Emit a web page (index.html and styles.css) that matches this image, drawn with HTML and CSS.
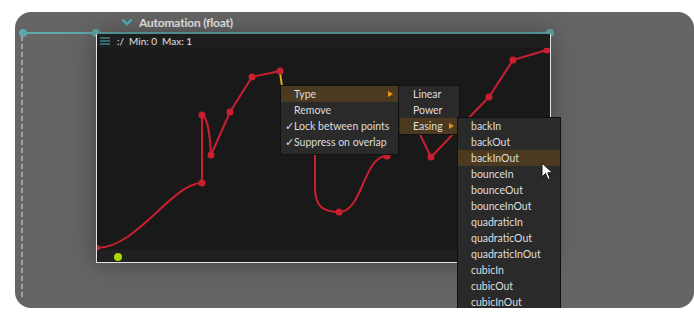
FILE: index.html
```html
<!DOCTYPE html>
<html lang="en">
<head>
    <meta charset="UTF-8">
    <title>Automation</title>
    <link rel="stylesheet" href="styles.css">
</head>
<body>
    <div class="panel">
        <div class="panel-title">
            <svg class="chevron" width="12" height="8" viewBox="0 0 12 8">
                <path d="M1.5 1.5 L6 6 L10.5 1.5" fill="none" stroke="#4fb3c0" stroke-width="2.4"/>
            </svg>
            <span>Automation (float)</span>
        </div>

        <!-- canvas: link line, ports, node -->
        <div class="link-line"></div>
        <div class="port port-a"></div>
        <div class="port port-b"></div>
        <div class="port port-c"></div>
        <div class="dash-line"></div>

        <div class="node">
            <div class="node-header">
                <svg width="10" height="8" viewBox="0 0 10 8">
                    <path d="M0 1 H10 M0 4 H10 M0 7 H10" stroke="#4fb3c0" stroke-width="1.2"/>
                </svg>
                <span>:/</span>
                <span>Min: 0</span>
                <span>Max: 1</span>
            </div>
            <div class="plot">
                <svg width="453" height="202" viewBox="0 0 453 202">
                    <g fill="none" stroke="#c91f30" stroke-width="2" stroke-linejoin="round">
                        <path d="M0,200 C40,200 75,135 105,135"/>
                        <path d="M105,135 L105,67 C110,68 113,86 114,107"/>
                        <path d="M114,107 L133,64 L155,29 L183,23"/>
                        <path d="M218,70 L218,140 C218,160 228,164 242,164 C266,164 266,108 290,108 L312,64 L334,109 L392,49 L416,12 L450,2"/>
                    </g>
                    <path d="M183,23 C186,60 200,70 218,70" fill="none" stroke="#e2b21a" stroke-width="2"/>
                    <g fill="#c91f30">
                        <circle cx="0" cy="200" r="3"/>
                        <circle cx="105" cy="135" r="3.5"/>
                        <circle cx="105" cy="67" r="3.5"/>
                        <circle cx="114" cy="107" r="3.5"/>
                        <circle cx="133" cy="64" r="3.5"/>
                        <circle cx="155" cy="29" r="3.5"/>
                        <circle cx="183" cy="23" r="3.5"/>
                        <circle cx="242" cy="164" r="3.5"/>
                        <circle cx="290" cy="108" r="3.5"/>
                        <circle cx="334" cy="109" r="3.5"/>
                        <circle cx="392" cy="49" r="3.5"/>
                        <circle cx="416" cy="12" r="3.5"/>
                        <circle cx="450" cy="2" r="3.5"/>
                    </g>
                </svg>
            </div>
            <div class="node-footer">
                <span class="playhead"></span>
            </div>
        </div>

        <!-- context menus -->
        <div class="menu menu-main">
            <div class="menu-item active">Type<span class="arrow"></span></div>
            <div class="menu-item">Remove</div>
            <div class="menu-item"><span class="check">✓</span>Lock between points</div>
            <div class="menu-item"><span class="check">✓</span>Suppress on overlap</div>
        </div>
        <div class="menu menu-type">
            <div class="menu-item">Linear</div>
            <div class="menu-item">Power</div>
            <div class="menu-item active">Easing<span class="arrow"></span></div>
        </div>
        <div class="menu menu-easing">
            <div class="menu-item">backIn</div>
            <div class="menu-item">backOut</div>
            <div class="menu-item active">backInOut</div>
            <div class="menu-item">bounceIn</div>
            <div class="menu-item">bounceOut</div>
            <div class="menu-item">bounceInOut</div>
            <div class="menu-item">quadraticIn</div>
            <div class="menu-item">quadraticOut</div>
            <div class="menu-item">quadraticInOut</div>
            <div class="menu-item">cubicIn</div>
            <div class="menu-item">cubicOut</div>
            <div class="menu-item">cubicInOut</div>
        </div>

        <svg class="cursor" width="13" height="19" viewBox="0 0 13 19">
            <path d="M1 1 L1 15 L4.5 11.5 L7 17.5 L9.2 16.6 L6.8 10.8 L11.5 10.8 Z" fill="#fff" stroke="#111" stroke-width="1"/>
        </svg>
    </div>
</body>
</html>
```

FILE: styles.css
```css
body {
    margin: 0;
    background-color: #ffffff;
    font-family: Lato, "Open Sans", sans-serif;
}

.panel {
    position: relative;
    margin: 12px 0 0 15px;
    width: 679px;
    height: 296px;
    border-radius: 16px;
    background-color: #656565;
    overflow: hidden;
}

.panel-title {
    display: flex;
    align-items: center;
    gap: 6px;
    height: 20px;
    padding-left: 106px;
    color: #e6e6e6;
    font-size: 12px;
    font-weight: bold;
    letter-spacing: -0.2px;
}

.link-line {
    position: absolute;
    left: 8px;
    top: 20px;
    width: 528px;
    height: 2px;
    background-color: #5fa8aa;
}

.port {
    position: absolute;
    top: 17px;
    width: 8px;
    height: 8px;
    border-radius: 50%;
    background-color: #5fa8aa;
}

.port-a { left: 4px; }
.port-b { left: 77px; }
.port-c { left: 531px; }

.dash-line {
    position: absolute;
    left: 6px;
    top: 24px;
    bottom: 8px;
    width: 2px;
    background: repeating-linear-gradient(to bottom, #a0a0a0 0 5px, transparent 5px 8px);
}

.node {
    position: absolute;
    left: 81px;
    top: 22px;
    width: 453px;
    border: 1px solid #e4e4e4;
    border-top: none;
    background-color: #191919;
    box-shadow: 0 0 24px rgba(0, 0, 0, 0.35);
}

.node-header {
    display: flex;
    align-items: center;
    gap: 5px;
    height: 14px;
    padding-left: 3px;
    background-color: #1e1e1e;
    color: #e0e0e0;
    font-size: 10px;
}

.node-header svg {
    margin-right: 2px;
}

.plot {
    height: 202px;
}

.plot svg {
    display: block;
}

.node-footer {
    position: relative;
    height: 12px;
    background-color: #202020;
}

.playhead {
    position: absolute;
    left: 17px;
    top: 3px;
    width: 8px;
    height: 8px;
    border-radius: 50%;
    background-color: #a8d800;
}

.menu {
    position: absolute;
    background-color: #2a2a2a;
    border: 1px solid #101010;
    color: #dedede;
    font-size: 10.5px;
}

.menu-item {
    position: relative;
    height: 16px;
    line-height: 16px;
    padding-left: 13px;
    white-space: nowrap;
}

.menu-item.active {
    background-color: #4b3a1f;
}

.check {
    position: absolute;
    left: 4px;
}

.arrow {
    position: absolute;
    right: 5px;
    top: 5px;
    border-left: 5px solid #e8950f;
    border-top: 3px solid transparent;
    border-bottom: 3px solid transparent;
}

.menu-main {
    left: 265px;
    top: 73px;
    width: 117px;
    padding-bottom: 4px;
}

.menu-type {
    left: 383px;
    top: 73px;
    width: 59px;
    padding-left: 1px;
}

.menu-easing {
    left: 442px;
    top: 105px;
    width: 102px;
}

.cursor {
    position: absolute;
    left: 526px;
    top: 150px;
}
```
